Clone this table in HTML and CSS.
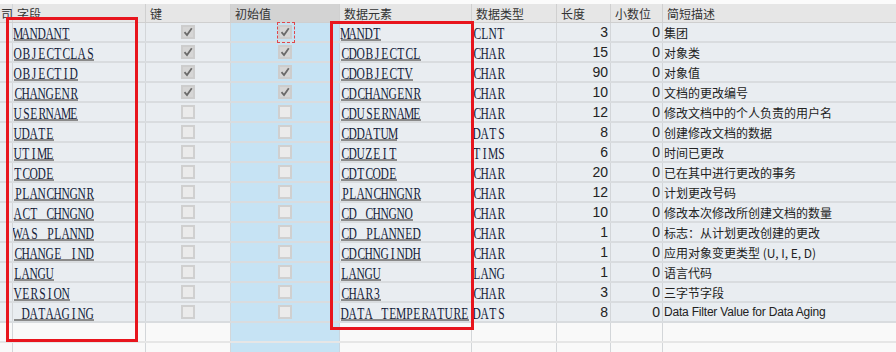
FILE: index.html
```html
<!DOCTYPE html>
<html>
<head>
<meta charset="utf-8">
<link rel="stylesheet" href="styles.css">
</head>
<body>
<div class="screen">
  <div class="topstrip"></div>
  <div class="row head">
    <div class="c stub"><span class="cut">司</span></div>
    <div class="c h">字段</div>
    <div class="c h">键</div>
    <div class="c h sel">初始值</div>
    <div class="c h">数据元素</div>
    <div class="c h">数据类型</div>
    <div class="c h">长度</div>
    <div class="c h">小数位</div>
    <div class="c h last">简短描述</div>
  </div>
  <div id="body"></div>
  <div class="redbox box1"></div>
  <div class="redbox box2"></div>
  <div class="focus"></div>
</div>
<script src="app.js"></script>
</body>
</html>
```
FILE: styles.css
```css
html, body { margin: 0; padding: 0; }
body { background: #f9f9f9; width: 896px; height: 352px; overflow: hidden; }
.screen { position: relative; width: 896px; height: 352px; overflow: hidden; background: #f9f9f9; }
.topstrip { height: 4px; background: #fbfbfb; }
.row {
  display: grid;
  grid-template-columns: 13px 133px 85px 109px 132px 85px 54px 52px 1fr;
  height: 20px;
  box-sizing: border-box;
  border-bottom: 2px solid #d9dcdf;
  background: #e9edf1;
}
.row.head { height: 19px; background: #e6e6e6; border-bottom: 1px solid #cfcfcf; }
.row.empty { background: #f9f9f9; border-bottom: 2px solid #e6e6e6; }
.c {
  box-sizing: border-box;
  border-right: 1px solid #d3d6d9;
  display: flex;
  align-items: center;
  overflow: hidden;
  white-space: nowrap;
  min-width: 0;
}
.c.last { border-right: 0; }
.h {
  font-family: "Noto Sans CJK SC", sans-serif;
  font-size: 12px;
  color: #333;
  padding-left: 4px;
  border-right: 1px solid #d0d0d0;
}
.h.sel { background: #d3d3d3; }
.stub { justify-content: flex-end; }
.cut {
  font-family: "Noto Sans CJK SC", sans-serif;
  font-size: 12px;
  color: #333;
  margin-right: -1px;
}
.blue { background: #c6e3f4; border-right-color: #c9d6e0; }
.mono {
  display: inline-flex;
  height: 17px;
  align-items: flex-end;
  font-family: "Liberation Serif", serif;
  font-size: 16px;
  line-height: 15px;
  color: #14223a;
}
.ch { display: inline-flex; width: 8px; justify-content: center; overflow: visible; }
.g { display: inline-block; transform: scaleX(0.72); }
.ul { box-shadow: inset 0 -2px 0 #8a8a8a; }
.fname { padding-left: 1px; }
.dtype { padding-left: 1px; }
.ctr { justify-content: center; }
.num {
  justify-content: flex-end;
  padding-right: 2px;
  font-family: "Liberation Sans", sans-serif;
  font-size: 14px;
  color: #222;
}
.desc {
  padding-left: 1px;
  font-family: "Liberation Sans", "Noto Sans CJK SC", sans-serif;
  font-size: 12px;
  letter-spacing: -0.2px;
  color: #222;
}
.cjk { font-family: "Noto Sans CJK SC", sans-serif; letter-spacing: 0; }
.cb {
  width: 14px; height: 14px;
  box-sizing: border-box;
  border: 2px solid #d0d0d0;
  background: #ebebeb;
  display: flex; align-items: center; justify-content: center;
}
.cb.on { background: #d6d6d6; border-color: #cdcdcd; }
.cb svg { display: block; }
.redbox {
  position: absolute;
  box-sizing: border-box;
  border: 3px solid #e8151d;
}
.box1 { left: 6px; top: 17px; width: 132px; height: 325px; }
.box2 { left: 330px; top: 21px; width: 144px; height: 309px; }
.focus {
  position: absolute;
  left: 277px; top: 22px; width: 18px; height: 21px;
  box-sizing: border-box;
  border: 1px dashed #e0474c;
}
```
FILE: app.js
```js
var rows = [
  ["MANDANT", 1, 1, "MANDT", "CLNT", 3, "集团", true],
  ["OBJECTCLAS", 1, 1, "CDOBJECTCL", "CHAR", 15, "对象类", true],
  ["OBJECTID", 1, 1, "CDOBJECTV", "CHAR", 90, "对象值", true],
  ["CHANGENR", 1, 1, "CDCHANGENR", "CHAR", 10, "文档的更改编号", true],
  ["USERNAME", 0, 0, "CDUSERNAME", "CHAR", 12, "修改文档中的个人负责的用户名", true],
  ["UDATE", 0, 0, "CDDATUM", "DATS", 8, "创建修改文档的数据", true],
  ["UTIME", 0, 0, "CDUZEIT", "TIMS", 6, "时间已更改", true],
  ["TCODE", 0, 0, "CDTCODE", "CHAR", 20, "已在其中进行更改的事务", true],
  ["PLANCHNGNR", 0, 0, "PLANCHNGNR", "CHAR", 12, "计划更改号码", true],
  ["ACT_CHNGNO", 0, 0, "CD_CHNGNO", "CHAR", 10, "修改本次修改所创建文档的数量", true],
  ["WAS_PLANND", 0, 0, "CD_PLANNED", "CHAR", 1, "标志：从计划更改创建的更改", true],
  ["CHANGE_IND", 0, 0, "CDCHNGINDH", "CHAR", 1, "应用对象变更类型 (U, I, E, D)", true],
  ["LANGU", 0, 0, "LANGU", "LANG", 1, "语言代码", true],
  ["VERSION", 0, 0, "CHAR3", "CHAR", 3, "三字节字段", true],
  ["_DATAAGING", 0, 0, "DATA_TEMPERATURE", "DATS", 8, "Data Filter Value for Data Aging", false]
];
var check = '<svg width="10" height="10" viewBox="0 0 10 10"><path d="M1.5 5.2 L4 8 L8.8 1.2" fill="none" stroke="#6a6a6a" stroke-width="1.8"/></svg>';
function cb(on) { return '<div class="cb' + (on ? ' on' : '') + '">' + (on ? check : '') + '</div>'; }
function esc(s) { return s.replace(/&/g, "&amp;").replace(/</g, "&lt;"); }
function mono(s, ul) {
  var out = '<span class="mono' + (ul ? ' ul' : '') + '">';
  for (var i = 0; i < s.length; i++) {
    var c = s.charAt(i);
    var g = c === "_" ? "&nbsp;" : esc(c);
    out += '<span class="ch"><span class="g">' + g + '</span></span>';
  }
  return out + '</span>';
}
var html = "";
rows.forEach(function (r) {
  html += '<div class="row">' +
    '<div class="c stub"></div>' +
    '<div class="c fname">' + mono(r[0], true) + '</div>' +
    '<div class="c ctr">' + cb(r[1]) + '</div>' +
    '<div class="c ctr blue">' + cb(r[2]) + '</div>' +
    '<div class="c fname">' + mono(r[3], true) + '</div>' +
    '<div class="c dtype">' + mono(r[4], false) + '</div>' +
    '<div class="c num">' + r[5] + '</div>' +
    '<div class="c num">0</div>' +
    '<div class="c last desc' + (r[7] ? ' cjk' : '') + '">' + esc(r[6]) + '</div>' +
    '</div>';
});
for (var i = 0; i < 2; i++) {
  html += '<div class="row empty">' +
    '<div class="c stub"></div><div class="c"></div><div class="c"></div>' +
    '<div class="c blue"></div><div class="c"></div><div class="c"></div>' +
    '<div class="c"></div><div class="c"></div><div class="c last"></div></div>';
}
document.getElementById("body").innerHTML = html;
```
